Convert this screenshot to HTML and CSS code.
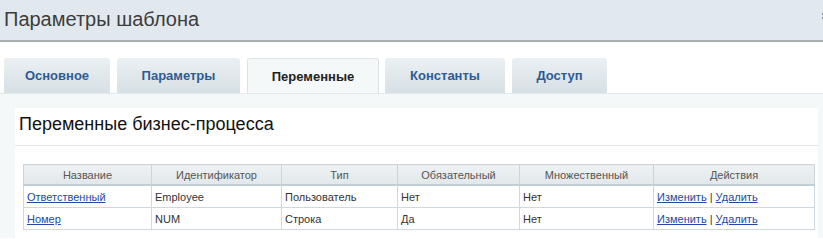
FILE: index.html
```html
<!DOCTYPE html>
<html lang="ru">
<head>
<meta charset="utf-8">
<title>Параметры шаблона</title>
<link rel="stylesheet" href="styles.css">
</head>
<body>
<header class="dlg-head">
  <h1 class="dlg-title">Параметры шаблона</h1>
  <span class="dlg-close"></span>
</header>
<nav class="tabs">
  <a class="tab t1">Основное</a>
  <a class="tab t2">Параметры</a>
  <a class="tab t3 active">Переменные</a>
  <a class="tab t4">Константы</a>
  <a class="tab t5">Доступ</a>
</nav>
<main class="panel">
  <section class="box">
    <h2 class="box-title">Переменные бизнес-процесса</h2>
    <table class="grid">
      <colgroup>
        <col class="c1"><col class="c2"><col class="c3"><col class="c4"><col class="c5"><col class="c6">
      </colgroup>
      <thead>
        <tr><th>Название</th><th>Идентификатор</th><th>Тип</th><th>Обязательный</th><th>Множественный</th><th>Действия</th></tr>
      </thead>
      <tbody>
        <tr><td><a href="#">Ответственный</a></td><td>Employee</td><td>Пользователь</td><td>Нет</td><td>Нет</td><td><a href="#">Изменить</a> | <a href="#">Удалить</a></td></tr>
        <tr><td><a href="#">Номер</a></td><td>NUM</td><td>Строка</td><td>Да</td><td>Нет</td><td><a href="#">Изменить</a> | <a href="#">Удалить</a></td></tr>
      </tbody>
    </table>
  </section>
</main>
</body>
</html>
```
FILE: styles.css
```css
html, body {
  margin: 0;
  padding: 0;
  background: #ffffff;
  font-family: "Liberation Sans", Arial, sans-serif;
}
.dlg-head {
  height: 40px;
  background: #e1e9ef;
  border-bottom: 2px solid #a9aeb1;
  display: flex;
  align-items: center;
  position: relative;
}
.dlg-title {
  margin: 0 0 0 4px;
  font-size: 20px;
  font-weight: normal;
  color: #3c3c3c;
  line-height: 30px;
  padding-bottom: 2px;
}
.dlg-close {
  position: absolute;
  right: -6px;
  top: 12px;
  width: 8px;
  height: 8px;
  background:
    radial-gradient(circle, #7d8a96 1.2px, transparent 1.5px) 0 0 / 4px 4px;
}
.tabs {
  display: flex;
  gap: 7px;
  padding: 16px 0 0 4px;
  height: 35px;
}
.tab {
  box-sizing: border-box;
  height: 35px;
  display: flex;
  align-items: center;
  justify-content: center;
  font-size: 13px;
  font-weight: bold;
  color: #2d5b95;
  background: linear-gradient(#ebf0f3, #d7e0e5);
  border-radius: 3px 3px 0 0;
}
.t1 { width: 106px; }
.t2 { width: 123px; }
.t3 { width: 132px; }
.t4 { width: 120px; }
.t5 { width: 95px; }
.tab.active {
  background: #f5f8f9;
  border: 1px solid #dbe3e7;
  border-bottom: none;
  color: #222;
}
.tabs .t4 { margin-left: -1px; }
.panel {
  display: block;
  background: #f5f8f9;
  border-top: 1px solid #e2e9ed;
  padding: 14px 5px 0 15px;
  height: 130px;
}
.box {
  background: #ffffff;
  height: 124px;
  padding-top: 6px;
}
.box-title {
  margin: 0;
  padding: 0 0 11px 4px;
  font-size: 18px;
  line-height: 20px;
  font-weight: normal;
  color: #111;
  border-bottom: 1px solid #dfe5e9;
}
.grid {
  margin: 18px 4px 0 8px;
  width: 791px;
  border-collapse: collapse;
  table-layout: fixed;
  font-size: 11px;
  color: #333;
}
.c1 { width: 128px; }
.c2 { width: 130px; }
.c3 { width: 116px; }
.c4 { width: 122px; }
.c5 { width: 134px; }
.c6 { width: 161px; }
.grid th {
  height: 19px;
  font-weight: normal;
  color: #555;
  text-align: center;
  background: linear-gradient(#eef2f4, #e1e7ea);
  border: 1px solid #cbd4da;
  border-bottom: 2px solid #c3cdd4;
  padding: 0 4px;
}
.grid td {
  height: 21px;
  border: 1px solid #cfd8de;
  padding: 0 3px;
  white-space: nowrap;
}
.grid a {
  color: #2348a7;
  text-decoration: underline;
}
```
